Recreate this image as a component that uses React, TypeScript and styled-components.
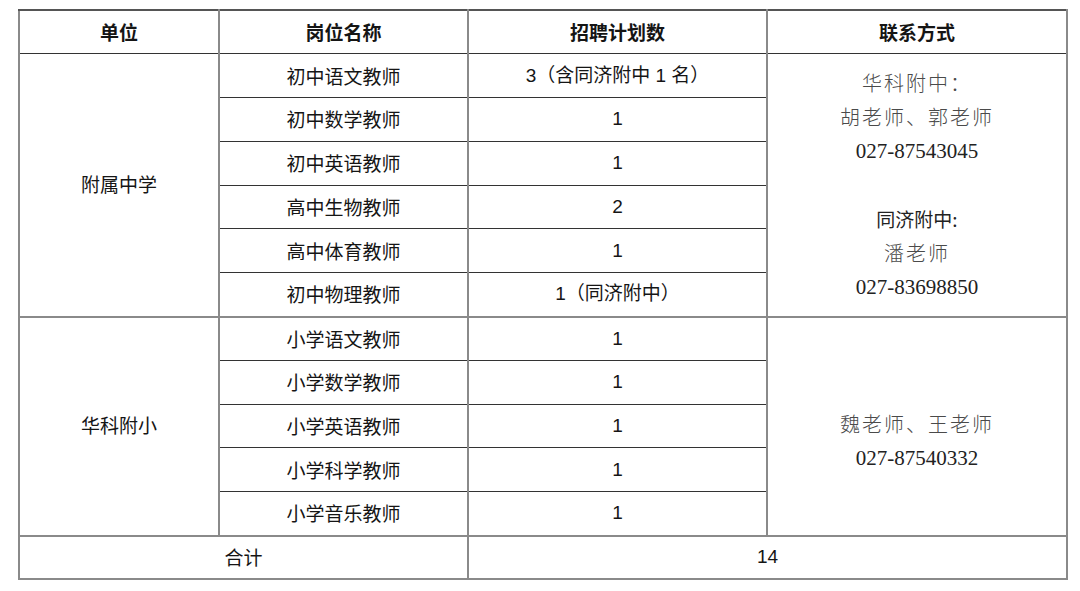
import React from "react";
import styled, { createGlobalStyle } from "styled-components";

const GlobalStyle = createGlobalStyle`
  html, body {
    margin: 0;
    padding: 0;
    background: #ffffff;
  }
  body {
    font-family: "Noto Sans CJK SC", "Liberation Sans", sans-serif;
    color: #111111;
    overflow: hidden;
  }
`;

interface Job {
  name: string;
  count: string;
}

const middleJobs: Job[] = [
  { name: "初中语文教师", count: "3（含同济附中 1 名）" },
  { name: "初中数学教师", count: "1" },
  { name: "初中英语教师", count: "1" },
  { name: "高中生物教师", count: "2" },
  { name: "高中体育教师", count: "1" },
  { name: "初中物理教师", count: "1（同济附中）" },
];

const primaryJobs: Job[] = [
  { name: "小学语文教师", count: "1" },
  { name: "小学数学教师", count: "1" },
  { name: "小学英语教师", count: "1" },
  { name: "小学科学教师", count: "1" },
  { name: "小学音乐教师", count: "1" },
];

export default function App() {
  return (
    <>
      <GlobalStyle />
      <Page>
        <Table>
          <colgroup>
            <col style={{ width: 200 }} />
            <col style={{ width: 249 }} />
            <col style={{ width: 299 }} />
            <col style={{ width: 300 }} />
          </colgroup>
          <thead>
            <Row>
              <HeadCell>单位</HeadCell>
              <HeadCell>岗位名称</HeadCell>
              <HeadCell>招聘计划数</HeadCell>
              <HeadCell>联系方式</HeadCell>
            </Row>
          </thead>
          <tbody>
            {middleJobs.map((job, i) => (
              <Row key={job.name}>
                {i === 0 && (
                  <UnitCell rowSpan={middleJobs.length}>附属中学</UnitCell>
                )}
                <Cell>{job.name}</Cell>
                <CountCell>{job.count}</CountCell>
                {i === 0 && (
                  <ContactCell rowSpan={middleJobs.length}>
                    <ContactLine>华科附中：</ContactLine>
                    <ContactLine>胡老师、郭老师</ContactLine>
                    <Phone>027-87543045</Phone>
                    <ContactLine>&nbsp;</ContactLine>
                    <ContactLine $plain>同济附中:</ContactLine>
                    <ContactLine>潘老师</ContactLine>
                    <Phone>027-83698850</Phone>
                  </ContactCell>
                )}
              </Row>
            ))}
            {primaryJobs.map((job, i) => (
              <Row key={job.name} $groupStart={i === 0}>
                {i === 0 && (
                  <UnitCell rowSpan={primaryJobs.length}>华科附小</UnitCell>
                )}
                <Cell>{job.name}</Cell>
                <CountCell>{job.count}</CountCell>
                {i === 0 && (
                  <ContactCell rowSpan={primaryJobs.length} $shift>
                    <ContactLine>魏老师、王老师</ContactLine>
                    <Phone>027-87540332</Phone>
                  </ContactCell>
                )}
              </Row>
            ))}
            <Row $groupStart>
              <Cell colSpan={2}>合计</Cell>
              <CountCell colSpan={2}>14</CountCell>
            </Row>
          </tbody>
        </Table>
      </Page>
    </>
  );
}

const Page = styled.div`
  padding: 9px 14px 0 18px;
`;

const Table = styled.table`
  width: 1048px;
  table-layout: fixed;
  border-collapse: collapse;
  border: 2px solid #8a8a8a;
  border-top: 2px solid #555555;
`;

const Row = styled.tr<{ $groupStart?: boolean }>`
  height: 43.8px;

  & > td {
    border-top: ${(p) =>
      p.$groupStart ? "2px solid #8a8a8a" : "1px solid #333333"};
  }
`;

const Cell = styled.td`
  border-left: 2px solid #8a8a8a;
  border-right: 2px solid #8a8a8a;
  border-bottom: 1px solid #333333;
  padding: 0;
  text-align: center;
  vertical-align: middle;
  font-family: "Noto Sans CJK SC", sans-serif;
  font-size: 19px;
  font-weight: 400;
  line-height: 24px;
  color: #151515;
`;

const HeadCell = styled(Cell).attrs({ as: "th" })`
  font-weight: 700;
  border-top: 2px solid #555555;
`;

const UnitCell = styled(Cell)`
  padding-bottom: 2px;
`;

const CountCell = styled(Cell)`
  font-family: "Liberation Sans", "Noto Sans CJK SC", sans-serif;
`;

const ContactCell = styled(Cell)<{ $shift?: boolean }>`
  padding-top: ${(p) => (p.$shift ? "30px" : "0")};
`;

const ContactLine = styled.div<{ $plain?: boolean }>`
  height: 34px;
  line-height: 34px;
  font-family: "Noto Sans CJK SC", serif;
  font-size: ${(p) => (p.$plain ? "19px" : "20px")};
  font-weight: ${(p) => (p.$plain ? 400 : 300)};
  letter-spacing: ${(p) => (p.$plain ? "0" : "2px")};
  color: ${(p) => (p.$plain ? "#222222" : "#4a4a4a")};
`;

const Phone = styled.div`
  height: 34px;
  line-height: 34px;
  font-family: "Liberation Serif", serif;
  font-size: 21px;
  color: #222222;
`;
